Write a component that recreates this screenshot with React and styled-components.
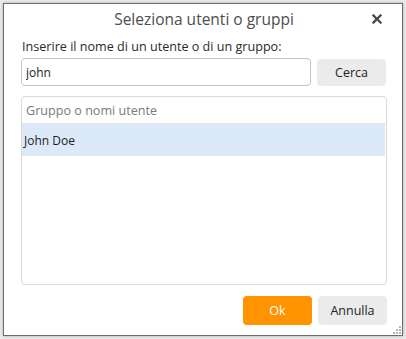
import React, { useState } from 'react';
import styled, { createGlobalStyle } from 'styled-components';

const GlobalStyle = createGlobalStyle`
  html, body {
    margin: 0;
    padding: 0;
    background: #ececec;
  }
  body {
    font-family: "Segoe UI", "Open Sans", "Noto Sans", sans-serif;
  }
  * { box-sizing: border-box; }
`;

const Dialog = styled.div`
  position: relative;
  margin: 3px;
  width: 400px;
  height: 333px;
  background: #fff;
  border: 1px solid #6e6e6e;
  box-shadow: 0 0 3px rgba(0, 0, 0, 0.3);
  display: flex;
  flex-direction: column;
  padding: 0 15px 10px 17px;
`;

const Header = styled.div`
  height: 30px;
  display: flex;
  align-items: center;
  justify-content: center;
  position: relative;
`;

const Title = styled.h1`
  margin: 0;
  font-size: 15.5px;
  font-weight: 400;
  color: #4d4d4d;
  letter-spacing: 0;
`;

const CloseButton = styled.button`
  position: absolute;
  right: 3px;
  top: 8px;
  width: 14px;
  height: 14px;
  padding: 0;
  border: none;
  background: none;
  cursor: pointer;
  display: flex;
  align-items: center;
  justify-content: center;
`;

const Label = styled.div`
  margin-top: 6px;
  font-size: 12.6px;
  line-height: 14px;
  color: #2a2a2a;
  padding-left: 1px;
`;

const SearchRow = styled.div`
  margin-top: 4px;
  display: flex;
  gap: 6px;
  align-items: center;
`;

const TextInput = styled.input`
  width: 290px;
  height: 28px;
  border: 1px solid #c4c4c4;
  border-radius: 4px;
  padding: 0 4px;
  font-family: inherit;
  font-size: 12px;
  color: #222;
  outline: none;
`;

const Button = styled.button`
  width: 69px;
  height: ${(p) => p.$height || 27}px;
  border: none;
  border-radius: 4px;
  background: ${(p) => (p.$primary ? '#ff9300' : '#ebebeb')};
  color: ${(p) => (p.$primary ? '#fff' : '#222')};
  font-family: inherit;
  font-size: 12.5px;
  cursor: pointer;
`;

const ListBox = styled.div`
  margin-top: 10px;
  width: 366px;
  flex: 1;
  border: 1px solid #dadada;
  border-radius: 4px;
  display: flex;
  flex-direction: column;
  overflow: hidden;
`;

const ListHeader = styled.div`
  height: 27px;
  flex-shrink: 0;
  display: flex;
  align-items: center;
  padding-left: 4px;
  font-size: 12.6px;
  color: #7a7a7a;
  border-bottom: 1px solid #e4e4e4;
`;

const ListRow = styled.div`
  height: 32px;
  margin-right: 1px;
  display: flex;
  align-items: center;
  padding-left: 2px;
  font-size: 12px;
  color: #1e1e1e;
  background: ${(p) => (p.$selected ? '#dbe9f9' : 'transparent')};
  cursor: default;
`;

const Footer = styled.div`
  margin-top: 11px;
  width: 366px;
  display: flex;
  justify-content: flex-end;
  gap: 6px;
`;

const Grip = styled.svg`
  position: absolute;
  right: 1px;
  bottom: 1px;
`;

const users = ['John Doe'];

const App = () => {
  const [query, setQuery] = useState('john');
  const [selected, setSelected] = useState('John Doe');

  return (
    <>
      <GlobalStyle />
      <Dialog>
        <Header>
          <Title>Seleziona utenti o gruppi</Title>
          <CloseButton aria-label="Chiudi">
            <svg width="10" height="10" viewBox="0 0 10 10">
              <path d="M1.5 1.5 L8.5 8.5 M8.5 1.5 L1.5 8.5" stroke="#4a4a4a" strokeWidth="2.3" strokeLinecap="square" />
            </svg>
          </CloseButton>
        </Header>
        <Label>Inserire il nome di un utente o di un gruppo:</Label>
        <SearchRow>
          <TextInput value={query} onChange={(e) => setQuery(e.target.value)} />
          <Button>Cerca</Button>
        </SearchRow>
        <ListBox>
          <ListHeader>Gruppo o nomi utente</ListHeader>
          {users.map((name) => (
            <ListRow key={name} $selected={selected === name} onClick={() => setSelected(name)}>
              {name}
            </ListRow>
          ))}
        </ListBox>
        <Footer>
          <Button $primary $height={29}>Ok</Button>
          <Button $height={29}>Annulla</Button>
        </Footer>
        <Grip width="8" height="8" viewBox="0 0 8 8">
          <rect x="6" y="0" width="2" height="2" fill="#b5b5b5" />
          <rect x="3" y="3" width="2" height="2" fill="#b5b5b5" />
          <rect x="6" y="3" width="2" height="2" fill="#b5b5b5" />
          <rect x="0" y="6" width="2" height="2" fill="#b5b5b5" />
          <rect x="3" y="6" width="2" height="2" fill="#b5b5b5" />
          <rect x="6" y="6" width="2" height="2" fill="#b5b5b5" />
        </Grip>
      </Dialog>
    </>
  );
};

export default App;
